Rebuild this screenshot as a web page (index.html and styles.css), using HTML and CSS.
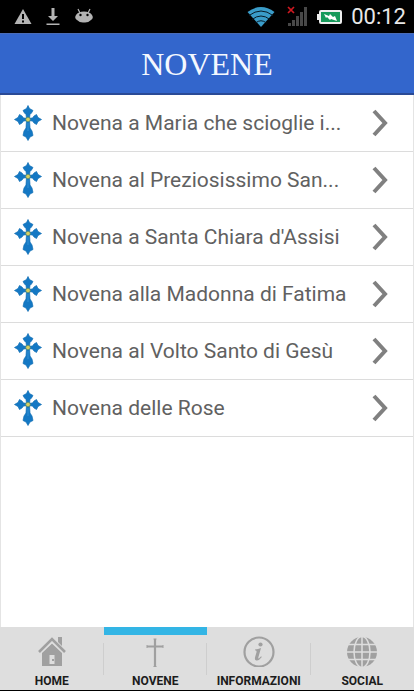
FILE: index.html
```html
<!DOCTYPE html>
<html lang="it">
<head>
<meta charset="utf-8">
<meta name="viewport" content="width=device-width, initial-scale=1">
<title>NOVENE</title>
<link rel="stylesheet" href="styles.css">
</head>
<body>
<svg class="defs" aria-hidden="true">
  <symbol id="cross" viewBox="0 0 28 36">
    <g fill="#1478c4" stroke="#1270b5" stroke-width=".7">
      <path d="M14 .5 15.500 3.500 19 5.500 17.500 8 16 9.500 15.500 13H12.500L12 9.500 10.500 8 9 5.500 12.500 3.500Z"/>
      <path d="M.5 14.500 4 12.500 5.500 9.500 8 11 9.500 13 13 13.300V15.700L9.500 16 8 18 5.500 19.500 4 16.500Z"/>
      <path d="M27.500 14.500 24 12.500 22.500 9.500 20 11 18.500 13 15 13.300V15.700L18.500 16 20 18 22.500 19.500 24 16.500Z"/>
      <path d="M12.500 15H15.500L16 23 18 26 19 30.500 16 32 14 35.500 12 32 9 30.500 10 26 12 23Z"/>
    </g>
    <path d="M14 18v8" stroke="#3390d4" stroke-width="1"/>
    <circle cx="14" cy="14.500" r="2.300" fill="#d8cf62" stroke="#4d8670" stroke-width=".7"/>
  </symbol>
  <symbol id="chevron" viewBox="0 0 16 28">
    <path d="M2 2 13 14 2 26" fill="none" stroke="#808080" stroke-width="4"/>
  </symbol>
</svg>
<div class="screen">
  <div class="status">
    <div class="status-group notices">
      <svg width="18" height="18" viewBox="0 0 18 18"><path d="M9 1 17.500 16H.5Z" fill="#b4b4b4"/><path d="M9 6v5M9 12.500v2" stroke="#000" stroke-width="2"/></svg>
      <svg width="14" height="18" viewBox="0 0 14 18"><path d="M5.500 0h3v8H12L7 13 2 8H5.500ZM.5 15.500h13V17H.5Z" fill="#b4b4b4"/></svg>
      <svg width="20" height="18" viewBox="0 0 20 18"><path d="M4 1 6 5M16 1 14 5" stroke="#b4b4b4" stroke-width="1.200"/><path d="M2 7Q4 3.500 10 3.500T18 7Q20 10 17 12 14 15 10 14.500 6 15 3 12 0 10 2 7Z" fill="#b4b4b4"/><circle cx="6.500" cy="7" r="1.200"/><circle cx="13.500" cy="7" r="1.200"/></svg>
    </div>
    <div class="status-group">
      <svg width="28" height="22" viewBox="0 0 28 22"><path d="M14 21 .5 6Q14-4 27.500 6Z" fill="#3a9cc9"/><path d="M2 9.500Q14 .5 26 9.500M5 13.500Q14 6.500 23 13.500M8.500 17Q14 12.500 19.500 17" fill="none" stroke="#071b27" stroke-width="1"/></svg>
      <svg class="signal" width="22" height="22" viewBox="0 0 22 22"><path d="M1 20v-3h3v3zM5 20v-6h3v6zM9 20v-10h3v10zM13 20V6h3v14zM17 20V1h3v19z" fill="#484848"/><path d="m1 1 6 6M7 1 1 7" stroke="#d01820" stroke-width="1.700"/></svg>
      <svg width="26" height="16" viewBox="0 0 26 16"><path d="M0 5h2v6H0z" fill="#eee"/><rect x="3" y="2" width="21" height="12" rx="1" fill="#16995a" stroke="#eee" stroke-width="2"/><path d="m7 5 5 2 1-2 3 3 2-1 2 5-6-2-1 1-3-3-1 1Z" fill="#fff"/></svg>
      <time class="clock">00:12</time>
    </div>
  </div>
  <header class="header"><h1>NOVENE</h1></header>
  <main class="content">
    <ul class="list">
      <li><a class="row" href="#"><svg class="cross"><use href="#cross"/></svg><span class="label">Novena a Maria che scioglie i...</span><svg class="chevron"><use href="#chevron"/></svg></a></li>
      <li><a class="row" href="#"><svg class="cross"><use href="#cross"/></svg><span class="label">Novena al Preziosissimo San...</span><svg class="chevron"><use href="#chevron"/></svg></a></li>
      <li><a class="row" href="#"><svg class="cross"><use href="#cross"/></svg><span class="label">Novena a Santa Chiara d'Assisi</span><svg class="chevron"><use href="#chevron"/></svg></a></li>
      <li><a class="row" href="#"><svg class="cross"><use href="#cross"/></svg><span class="label">Novena alla Madonna di Fatima</span><svg class="chevron"><use href="#chevron"/></svg></a></li>
      <li><a class="row" href="#"><svg class="cross"><use href="#cross"/></svg><span class="label">Novena al Volto Santo di Gesù</span><svg class="chevron"><use href="#chevron"/></svg></a></li>
      <li><a class="row" href="#"><svg class="cross"><use href="#cross"/></svg><span class="label">Novena delle Rose</span><svg class="chevron"><use href="#chevron"/></svg></a></li>
    </ul>
  </main>
  <nav class="tabs">
    <a class="tab" href="#">
      <svg width="32" height="32" viewBox="0 0 32 32"><path d="M3 17 16 4 29 17" fill="none" stroke="#a0a0a0" stroke-width="2.600"/><path d="M22 2h4v9l-4-4Z" fill="#a0a0a0"/><path d="M6 18 16 8.500 26 18V31H6Z" fill="#a0a0a0"/><path d="M3.500 19.500 16 7.500 28.500 19.500" fill="none" stroke="#dedede" stroke-width="1"/><path d="M13.500 20h5v9h-5z" fill="#dedede"/><path d="M16 24h2v2h-2z" fill="#a0a0a0"/></svg>
      <span>HOME</span>
    </a>
    <a class="tab active" href="#" aria-current="page">
      <svg width="32" height="32" viewBox="0 0 32 32"><path d="M16 4V33M8 11.500h16" stroke="#a0a0a0" stroke-width="2.200"/><path d="M14.500 4h3M14.500 31.500h3M8 10v3M24 10v3" stroke="#a0a0a0" stroke-width="1"/></svg>
      <span>NOVENE</span>
    </a>
    <a class="tab" href="#">
      <svg width="32" height="32" viewBox="0 0 32 32"><circle cx="16" cy="17" r="14.500" fill="none" stroke="#a0a0a0" stroke-width="2.200"/><circle cx="17.500" cy="9.500" r="2.100" fill="#a0a0a0"/><path d="M12 14.500q3-.5 6-1.500l-2.700 9.500q-.3 1.500.8.800l2-2 .7.800q-3 4-5.500 3.400-2-.5-1.200-3.500l1.500-5q.3-1.700-1.600-1.700Z" fill="#a0a0a0"/></svg>
      <span>INFORMAZIONI</span>
    </a>
    <a class="tab" href="#">
      <svg width="32" height="32" viewBox="0 0 32 32"><circle cx="16" cy="17" r="15" fill="#a0a0a0"/><path d="M16 1v31M1 17h30M2 9.500h28M2 24.500h28" stroke="#dedede" stroke-width="1.500"/><ellipse cx="16" cy="17" rx="8" ry="15.500" fill="none" stroke="#dedede" stroke-width="1.500"/></svg>
      <span>SOCIAL</span>
    </a>
  </nav>
</div>
</body>
</html>
```
FILE: styles.css
```css
* { box-sizing: border-box; }

body {
  margin: 0;
  background: #000;
  font-family: Roboto, "Liberation Sans", sans-serif;
}

a { color: inherit; text-decoration: none; }

.defs { position: absolute; width: 0; height: 0; }

.screen {
  display: flex;
  flex-direction: column;
  min-height: 100vh;
  padding-bottom: 1px;
}

.status {
  display: flex;
  justify-content: space-between;
  align-items: center;
  height: 33px;
  padding: 0 8px 0 14px;
  background: #000;
}

.status-group { display: flex; align-items: center; gap: 8px; }
.notices { gap: 14px; }
.signal { margin-left: 4px; }

.clock { color: #e8e8e8; font-size: 22px; line-height: 32px; }

.header {
  display: flex;
  align-items: center;
  justify-content: center;
  height: 62px;
  border-top: 1px solid #4a6cb8;
  border-bottom: 2px solid #2a4a96;
  background: #3366cc;
}

.header h1 {
  margin: 0;
  color: #f4f8ff;
  font: 400 32px/34px "Liberation Serif", serif;
}

.content {
  flex: 1;
  border: 0 solid #e4e4e4;
  border-width: 0 1px;
  background: #fff;
}

.list { margin: 0; padding: 0; list-style: none; }

.row {
  display: flex;
  align-items: center;
  gap: 10px;
  height: 57px;
  padding: 0 25px 0 13px;
  border-bottom: 1px solid #dcdcdc;
  color: #616161;
  font-size: 21px;
  line-height: 28px;
}

.cross { flex: none; width: 28px; height: 36px; }
.label { flex: 1; white-space: nowrap; }
.chevron { flex: none; width: 16px; height: 28px; }

.tabs {
  display: grid;
  grid-template-columns: repeat(4, 1fr);
  background: #dedede;
}

.tab {
  display: flex;
  flex-direction: column;
  align-items: center;
  gap: 5px;
  height: 63px;
  border-top: 8px solid transparent;
  background: linear-gradient(#cecece, #cecece) right 8px / 1px 32px no-repeat;
  color: #1c1c1c;
  font-size: 12px;
  font-weight: 700;
  line-height: 18px;
}

.tab svg { flex: none; }
.tab:last-child { background: none; }
.tab.active { border-top-color: #33b5e5; }
```
